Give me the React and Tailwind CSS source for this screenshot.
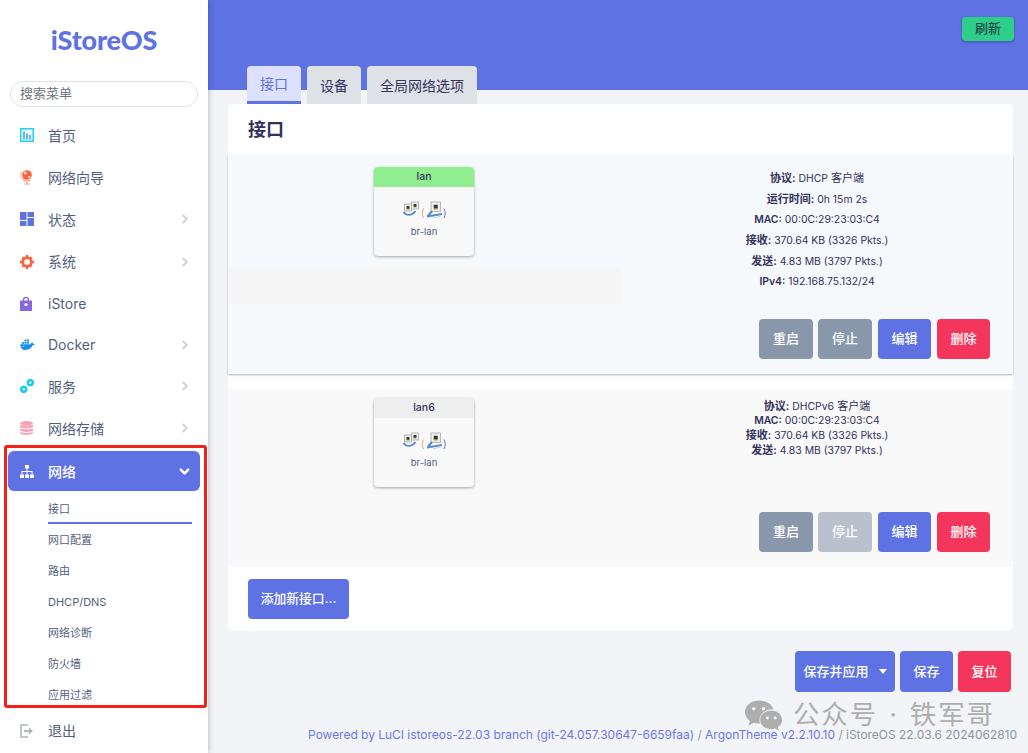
import { ChevronRight, ChevronDown } from 'lucide-react'

const SANS = "font-['Inter','Noto_Sans_CJK_SC',sans-serif]"

function ChartIcon() {
  return (
    <svg viewBox="0 0 14 14" className="h-[14px] w-[14px]">
      <rect x="0.75" y="0.75" width="12.5" height="12.5" fill="#e8f9fd" stroke="#22d3f0" strokeWidth="1.5" />
      <path d="M3 3.5h2v8H3zM6 5.5h2v6H6zM9 7h2v4.500H9z" fill="#5fb8e8" />
    </svg>
  )
}

function GlobeIcon() {
  return (
    <svg viewBox="0 0 14 16" className="h-4 w-[14px]">
      <circle cx="7" cy="6" r="4.800" fill="#fb6340" />
      <path d="M3.500 3.500l2.500-1.200 1 2.200-2 1.500zM8 7l2.500 0-1.500 3z" fill="#fff" opacity="0.75" />
      <path d="M2 2.500a6 6 0 0 0 1 8 6 6 0 0 0 7.500 0.500M7 12v2.500M4 15h6" fill="none" stroke="#fda08a" strokeWidth="1.100" />
    </svg>
  )
}

function GridIcon() {
  return (
    <svg viewBox="0 0 14 14" className="h-[14px] w-[14px]" fill="#5e72e4">
      <rect width="6.500" height="8" />
      <rect x="7.500" width="6.500" height="5" />
      <rect y="9" width="6.500" height="5" />
      <rect x="7.500" y="6" width="6.500" height="8" />
    </svg>
  )
}

function GearIcon() {
  return (
    <svg viewBox="0 0 14 14" className="h-[14px] w-[14px]">
      <circle cx="7" cy="7" r="4.300" fill="none" stroke="#fb6340" strokeWidth="2.800" />
      <path d="M5.800 0h2.400v2H5.800zM5.800 12h2.400v2H5.800zM0 5.800h2v2.400H0zM12 5.800h2v2.400h-2zM1.500 3.200l1.700-1.700 1.400 1.400-1.700 1.700zM9.400 11.100l1.700-1.700 1.400 1.400-1.700 1.700zM10.800 1.500l1.700 1.700-1.400 1.400-1.700-1.700zM2.900 9.400l1.700 1.700-1.400 1.400-1.700-1.700z" fill="#fb6340" />
    </svg>
  )
}

function BagIcon() {
  return (
    <svg viewBox="0 0 12 14" className="h-[14px] w-3">
      <rect y="3.500" width="12" height="10.500" fill="#8965e0" />
      <path d="M3.500 4V2.800a2.500 2.500 0 0 1 5 0V4" fill="none" stroke="#8965e0" strokeWidth="1.300" />
      <circle cx="6" cy="7.500" r="1.600" fill="#fff" />
    </svg>
  )
}

function DockerIcon() {
  return (
    <svg viewBox="0 0 15 11" className="h-[11px] w-[15px]">
      <path d="M0.300 5.200h10.200c.5-.9.900-1.600 1.700-1.900.5.500.7 1 .8 1.500.7-.3 1.300-.2 1.900.2-.5 1-1.400 1.300-2.400 1.300C11.600 9 9.300 11 5.500 11 2.200 11 .4 8.700.300 5.200z" fill="#1d8fe6" />
      <path d="M2 3h2v1.800H2zM4.500 3h2v1.800h-2zM7 3h2v1.800H7zM4.500.6h2v1.800h-2zM7 .6h2v1.800H7z" fill="#1d8fe6" />
      <circle cx="3.500" cy="7.500" r="0.600" fill="#fff" />
    </svg>
  )
}

function ServiceIcon() {
  return (
    <svg viewBox="0 0 14 14" className="h-[14px] w-[14px]" fill="none" stroke="#11cdef">
      <circle cx="10.300" cy="3.700" r="2.400" strokeWidth="2.400" />
      <circle cx="10.300" cy="3.700" r="3.200" strokeWidth="1" strokeDasharray="1.200 1.300" />
      <circle cx="3.700" cy="10.300" r="2.400" strokeWidth="2.400" />
      <circle cx="3.700" cy="10.300" r="3.200" strokeWidth="1" strokeDasharray="1.200 1.300" />
    </svg>
  )
}

function DbIcon() {
  return (
    <svg viewBox="0 0 13 14" className="h-[14px] w-[13px]" fill="#f5a3b5">
      <ellipse cx="6.500" cy="2.200" rx="6.500" ry="2.200" />
      <path d="M0 3.600c1.500 1.500 11.500 1.500 13 0v2.400c-1.500 1.700-11.500 1.700-13 0zM0 7.200c1.500 1.500 11.500 1.500 13 0v2.400c-1.500 1.700-11.500 1.700-13 0zM0 10.800c1.500 1.500 11.500 1.500 13 0v1c-1.500 2.900-11.500 2.900-13 0z" />
    </svg>
  )
}

function SitemapIcon() {
  return (
    <svg viewBox="0 0 14 13" className="h-[13px] w-[14px]" fill="#fff">
      <rect x="5" width="4" height="3.500" />
      <rect y="9.500" width="4" height="3.500" />
      <rect x="5" y="9.500" width="4" height="3.500" />
      <rect x="10" y="9.500" width="4" height="3.500" />
      <path d="M6.500 3.500h1V6H12.500v3.500h-1V7h-4v2.500h-1V7h-4v2.500h-1V6h5z" />
    </svg>
  )
}

function LogoutIcon() {
  return (
    <svg viewBox="0 0 14 14" className="h-[14px] w-[14px]" fill="none" stroke="#adb5bd" strokeWidth="1.500">
      <path d="M8 1H1v12h7" />
      <path d="M4 6h5V3.500L13 7l-4 3.500V8H4z" fill="#adb5bd" stroke="none" />
    </svg>
  )
}

// the little framed port picture used in the bridge icon
function Port({ x, y, s = 7 }) {
  const inner = s * 0.42
  return (
    <g>
      <rect x={x} y={y} width={s} height={s} fill="#efefef" stroke="#a9a9a9" strokeWidth="0.800" />
      <rect x={x + (s - inner) / 2} y={y + (s - inner) / 2} width={inner} height={inner} fill="#2f3a30" />
      <rect x={x + (s - inner) / 2} y={y + s * 0.68} width={inner} height={s * 0.14} fill="#c9b85a" />
    </g>
  )
}

function BridgeIcon() {
  return (
    <svg viewBox="0 0 43 18" className="h-[18px] w-[43px] overflow-visible">
      <Port x={8.500} y={1} />
      <Port x={1.500} y={3} />
      <path d="M0.500 11c3 4.500 9 3.500 12-1" fill="none" stroke="#5a8cc8" strokeWidth="1.800" />
      <Port x={28} y={1} s={9.500} />
      <path d="M24.500 15.500l4.500-5.500M24 15.500l15-2.500" fill="none" stroke="#5a8cc8" strokeWidth="2" />
      <path d="M38 15l-8 2" fill="none" stroke="#c8d8ea" strokeWidth="1.200" />
      <path d="M20.500 7.500c-1.600 3-1.600 6.500 0 9.500" fill="none" stroke="#f0a868" strokeWidth="1" />
      <path d="M41 7.500c1.600 3 1.600 6.500 0 9.500" fill="none" stroke="#5e72e4" strokeWidth="1" />
    </svg>
  )
}

const menuTop = [
  { label: '首页', icon: <ChartIcon />, h: 'h-[42px]' },
  { label: '网络向导', icon: <GlobeIcon />, h: 'h-[42px]' },
  { label: '状态', icon: <GridIcon />, arrow: true, h: 'h-[42px]' },
  { label: '系统', icon: <GearIcon />, arrow: true, h: 'h-[43px]' },
  { label: 'iStore', icon: <BagIcon />, h: 'h-[41px]' },
  { label: 'Docker', icon: <DockerIcon />, arrow: true, h: 'h-[41px]' },
  { label: '服务', icon: <ServiceIcon />, arrow: true, h: 'h-[42px]' },
  { label: '网络存储', icon: <DbIcon />, arrow: true, h: 'h-[42px]' },
]

const subMenu = ['网口配置', '路由', 'DHCP/DNS', '网络诊断', '防火墙', '应用过滤']

function MenuItem({ label, icon, arrow, h }) {
  return (
    <div className={`flex shrink-0 items-center pl-5 pr-4 text-[14px] text-[#525f7f] ${h}`}>
      <span className="flex w-[28px] justify-start">{icon}</span>
      <span className="flex-1">{label}</span>
      {arrow && <ChevronRight size={14} strokeWidth={3.500} className="text-[#ced4da]" />}
    </div>
  )
}

function Sidebar() {
  return (
    <aside className="relative z-10 flex h-[753px] w-[208px] shrink-0 flex-col bg-white shadow-[0_0_6px_rgba(0,0,0,0.3)]">
      <div className="flex h-[81px] shrink-0 items-center justify-center">
        <span className="font-['Lato',sans-serif] text-[27px] font-black tracking-[-0.2px] text-[#5e72e4]">iStoreOS</span>
      </div>
      <div className="mx-[10px] flex h-[26px] shrink-0 items-center rounded-full border border-[#dee2e6] px-[9px] text-[13px] text-[#6c757d]">搜索菜单</div>
      <div className="mt-[7px]">
        {menuTop.map((item) => (
          <MenuItem key={item.label} {...item} />
        ))}
      </div>
      <div className="mx-2 mt-[2px] flex h-10 shrink-0 items-center rounded-md bg-[#5e72e4] pl-3 pr-2 text-[14px] font-medium text-white">
        <span className="flex w-[28px]"><SitemapIcon /></span>
        <span className="flex-1">网络</span>
        <ChevronDown size={15} strokeWidth={4} />
      </div>
      <div className="ml-12 mr-4 mt-[6px] flex flex-col text-[11px] text-[#525f7f]">
        <div className="flex h-[27px] items-center border-b-2 border-[#5e72e4]">接口</div>
        {subMenu.map((name) => (
          <div key={name} className="flex h-[31px] items-center pt-[1px]">{name}</div>
        ))}
      </div>
      <MenuItem label="退出" icon={<LogoutIcon />} h="h-[41px]" />
    </aside>
  )
}

function Btn({ color, children, className = '' }) {
  return (
    <div className={`flex items-center justify-center rounded-[4px] text-[13px] font-medium text-white ${color} ${className}`}>
      {children}
    </div>
  )
}

function DeviceCard({ name, headClass }) {
  return (
    <div className="flex h-[89px] w-[100px] flex-col overflow-hidden rounded-[4px] bg-[#f9f9f9] shadow-[0_1px_3px_rgba(0,0,0,0.35)]">
      <div className={`flex h-5 items-center justify-center text-[10.5px] font-medium text-[#32325d] ${headClass}`}>{name}</div>
      <div className="flex flex-1 flex-col items-center pt-[14px]">
        <BridgeIcon />
        <span className="mt-[6px] text-[9.500px] text-[#525f7f]">br-lan</span>
      </div>
    </div>
  )
}

// Chinese labels render a little larger than the latin values in the reference
function Info({ rows, lineClass }) {
  return (
    <div className="text-center text-[10.400px] text-[#32325d]">
      {rows.map(([k, v, cjk]) => (
        <div key={k} className={lineClass}>
          <b className={k === 'MAC' || k === 'IPv4' ? 'font-semibold' : 'text-[11px] font-semibold'}>{k}:</b> {v}
          {cjk && <span className="text-[11px]"> {cjk}</span>}
        </div>
      ))}
    </div>
  )
}

function RowButtons({ stopMuted }) {
  return (
    <div className="flex justify-end pr-[23px]">
      <Btn color="bg-[#8898aa]" className="h-10 w-[54px]">重启</Btn>
      <Btn color={stopMuted ? 'bg-[#b8c1cc]' : 'bg-[#8898aa]'} className="ml-[5px] h-10 w-[54px]">停止</Btn>
      <Btn color="bg-[#5e72e4]" className="ml-[6px] h-10 w-[53px]">编辑</Btn>
      <Btn color="bg-[#f5365c]" className="ml-[6px] h-10 w-[53px]">删除</Btn>
    </div>
  )
}

export default function App() {
  return (
    <div className={`relative flex h-[753px] w-[1028px] overflow-hidden bg-[#f3f4f7] ${SANS}`}>
      <Sidebar />
      <main className="flex min-w-0 flex-1 flex-col">
        <div className="relative h-[90px] bg-[#5e72e4]">
          <div className="flex justify-end pr-[14px] pt-[17px]">
            <Btn color="bg-[#2dce89]" className="h-6 w-[52px] !text-[#1f4a50] shadow-[0_1px_3px_rgba(0,0,0,0.3)]">刷新</Btn>
          </div>
          <div className="absolute left-[39px] top-[66px] flex gap-[6px] text-[14px]">
            <div className="flex h-[38px] w-[54px] items-center justify-center rounded-t-[4px] border-b-[3px] border-[#5e72e4] bg-[#dee0ff] text-[#5e72e4]">接口</div>
            <div className="flex h-[38px] w-[54px] items-center justify-center rounded-t-[4px] bg-[#dee2e6] text-[#32325d]">设备</div>
            <div className="flex h-[38px] w-[110px] items-center justify-center rounded-t-[4px] bg-[#dee2e6] text-[#32325d]">全局网络选项</div>
          </div>
        </div>
        <div className="flex-1 pl-5 pr-[15px] pt-[14px]">
          <section className="h-[527px] rounded-[6px] bg-white">
            <h2 className="flex h-[51px] items-center pl-5 text-[18px] font-bold text-[#32325d]">接口</h2>
            <div className="h-[219px] bg-[#f6f9fc] shadow-[0_1px_2px_rgba(0,0,0,0.3)]">
              <div className="flex h-[164px]">
                <div className="w-[393px]">
                  <div className="flex justify-center pr-px pt-3"><DeviceCard name="lan" headClass="bg-[#90ee90]" /></div>
                  <div className="mt-3 h-9 bg-[#f5f5f5]" />
                </div>
                <div className="flex-1 pt-[13px]">
                  <Info
                    lineClass="h-[20.800px] leading-[20.800px]"
                    rows={[
                      ['协议', 'DHCP', '客户端'],
                      ['运行时间', '0h 15m 2s'],
                      ['MAC', '00:0C:29:23:03:C4'],
                      ['接收', '370.64 KB (3326 Pkts.)'],
                      ['发送', '4.83 MB (3797 Pkts.)'],
                      ['IPv4', '192.168.75.132/24'],
                    ]}
                  />
                </div>
              </div>
              <RowButtons />
            </div>
            <div className="mt-[15px] h-[178px] bg-[#f9f9f9]">
              <div className="flex h-[123px]">
                <div className="flex w-[393px] justify-center pr-px pt-[9px]">
                  <DeviceCard name="lan6" headClass="bg-[#eeeeee]" />
                </div>
                <div className="flex-1 pt-[10px]">
                  <Info
                    lineClass="h-[14.600px] leading-[14.600px]"
                    rows={[
                      ['协议', 'DHCPv6', '客户端'],
                      ['MAC', '00:0C:29:23:03:C4'],
                      ['接收', '370.64 KB (3326 Pkts.)'],
                      ['发送', '4.83 MB (3797 Pkts.)'],
                    ]}
                  />
                </div>
              </div>
              <RowButtons stopMuted />
            </div>
            <div className="pl-5 pt-3">
              <Btn color="bg-[#5e72e4]" className="h-10 w-[101px] !text-[12.800px]">添加新接口...</Btn>
            </div>
          </section>
          <div className="mt-5 flex justify-end gap-[5px] pr-[2px]">
            <Btn color="bg-[#5e72e4]" className="h-[41px] w-[100px] gap-[10px]">
              保存并应用
              <svg viewBox="0 0 8 5" className="h-[5px] w-2" fill="#fff"><path d="M0 0h8L4 5z" /></svg>
            </Btn>
            <Btn color="bg-[#5e72e4]" className="h-[41px] w-[53px]">保存</Btn>
            <Btn color="bg-[#f5365c]" className="h-[41px] w-[53px]">复位</Btn>
          </div>
          <div className="-ml-5 -mr-1 mt-[36px] whitespace-nowrap text-right text-[11.960px] leading-[14px] text-[#8b95a5]">
            <span className="text-[#6a78ec]">Powered by LuCI istoreos-22.03 branch (git-24.057.30647-6659faa)</span>
            {' / '}
            <span className="text-[#6a78ec]">ArgonTheme v2.2.10.10</span>
            {' / iStoreOS 22.03.6 2024062810'}
          </div>
        </div>
      </main>

      {/* annotation box around the network menu */}
      <div className="absolute left-[4px] top-[445px] z-20 h-[263px] w-[203px] rounded-[3px] border-[3px] border-[#f5201a]" />

      {/* watermark */}
      <div className="absolute left-[744px] top-[695px] z-20 flex items-center gap-[10px] text-[26.500px] tracking-[1.800px] text-[#aeaeae] [word-spacing:2px]">
        <svg viewBox="0 0 40 32" className="h-[32px] w-[39px]" fill="#aeaeae">
          <path d="M15 1C7 1 1 6.500 1 13c0 3.800 2 7 5 9.200L4.500 27l5.500-3c1.500.5 3.200.7 5 .7.500 0 1 0 1.400-.1-.3-1-.5-2-.5-3 0-6.500 6-11.500 13.300-11.500h1C28.500 4.500 22.300 1 15 1z" />
          <path d="M39 21c0-5.200-5-9.500-11.200-9.500S16.600 15.800 16.600 21s5 9.500 11.200 9.500c1.300 0 2.600-.2 3.800-.6l4.300 2.300-1.100-3.800C37.300 26.700 39 24 39 21z" />
          <circle cx="10" cy="9.500" r="1.800" fill="#f3f4f7" />
          <circle cx="20" cy="9.500" r="1.800" fill="#f3f4f7" />
          <circle cx="24" cy="19" r="1.500" fill="#f3f4f7" />
          <circle cx="32" cy="19" r="1.500" fill="#f3f4f7" />
        </svg>
        <span>公众号 · 铁军哥</span>
      </div>
    </div>
  )
}
